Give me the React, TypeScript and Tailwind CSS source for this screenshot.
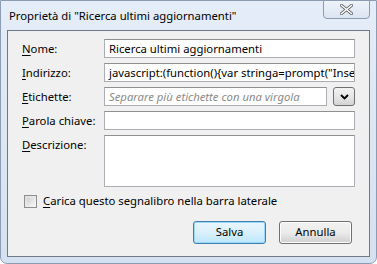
import React from "react";

const font = { fontFamily: '"Segoe UI", "Noto Sans", "Open Sans", sans-serif' };

function Key({ k, rest }: { k: string; rest: string }) {
  return (
    <span>
      <span className="underline underline-offset-2">{k}</span>
      {rest}
    </span>
  );
}

const boxCls =
  "h-[19px] flex-1 overflow-hidden whitespace-nowrap border border-[#abadb3] border-t-[#8e8f8f] bg-white px-[4px] text-[11.3px] leading-[17px]";

function Row({ label, children }: { label: React.ReactNode; children?: React.ReactNode }) {
  return (
    <div className="flex items-start">
      <div className="w-[82px] shrink-0 text-[11.3px] leading-[19px] text-black">{label}</div>
      {children}
    </div>
  );
}

export default function App() {
  return (
    <div
      className="flex h-[264px] w-[377px] flex-col overflow-hidden rounded-b-[7px] border border-[#8b9cb3] bg-gradient-to-b from-[#e4edf8] to-[#d5e1f0]"
      style={font}
    >
      {/* barra del titolo */}
      <div className="flex h-[29px] shrink-0 items-start justify-between">
        <div className="pl-[8px] pt-[7px] text-[11.3px] leading-[16px] text-black">
          Proprietà di "Ricerca ultimi aggiornamenti"
        </div>
        <div className="mr-[6px] -mt-px grid h-[19px] w-[47px] place-items-center rounded-b-[4px] border border-[#8c9bb1] bg-gradient-to-b from-[#eef3fa] to-[#dbe5f2]">
          <svg width="13" height="11" viewBox="0 0 13 11">
            <path d="M1.5 1.5 L11.5 9.5 M11.5 1.5 L1.5 9.5" stroke="#6b6b6b" strokeWidth="3.2" strokeLinecap="square" />
            <path d="M1.5 1.5 L11.5 9.5 M11.5 1.5 L1.5 9.5" stroke="#ffffff" strokeWidth="1.4" strokeLinecap="square" />
          </svg>
        </div>
      </div>

      {/* area client */}
      <div className="mx-[6px] mb-[6px] flex flex-1 flex-col border border-[#6f7a89] bg-[#f0f0f0] pl-[14px] pr-[14px] pt-[8px]">
        <div className="flex flex-col gap-[5px]">
          <Row label={<Key k="N" rest="ome:" />}>
            <div className={`${boxCls} text-black`}>Ricerca ultimi aggiornamenti</div>
          </Row>
          <Row label={<Key k="I" rest="ndirizzo:" />}>
            <div className={`${boxCls} text-black`}>javascript:(function(){"{"}var stringa=prompt("Inse</div>
          </Row>
          <Row label={<Key k="E" rest="tichette:" />}>
            <div className={`${boxCls} italic text-[#8a8a8a]`}>Separare più etichette con una virgola</div>
            <div className="ml-[6px] grid h-[19px] w-[22px] place-items-center rounded-[3px] border border-[#707070] bg-gradient-to-b from-[#f2f2f2] via-[#e6e6e6] to-[#d4d4d4]">
              <svg width="9" height="6" viewBox="0 0 9 6">
                <path d="M1 1 L4.5 4.5 L8 1" stroke="#000" strokeWidth="1.9" fill="none" />
              </svg>
            </div>
          </Row>
          <Row label={<Key k="P" rest="arola chiave:" />}>
            <div className={boxCls}></div>
          </Row>
          <Row label={<Key k="D" rest="escrizione:" />}>
            <div className={`${boxCls} h-[52px]`}></div>
          </Row>
        </div>

        <div className="mt-[6px] flex items-center pl-[2px]">
          <div className="h-[13px] w-[13px] border border-[#8f8f8f] bg-gradient-to-br from-[#dcdcdc] to-[#f6f6f6] p-[2px]">
            <div className="h-full w-full bg-gradient-to-br from-[#d0d0d0] to-[#f4f4f4]" />
          </div>
          <div className="ml-[6px] text-[11.3px] leading-[16px] text-black">
            <Key k="C" rest="arica questo segnalibro nella barra laterale" />
          </div>
        </div>

        <div className="mt-[12px] flex justify-end gap-[13px] pr-[3px]">
          <div className="grid h-[23px] w-[73px] place-items-center rounded-[3px] border border-[#3c7fb1] bg-gradient-to-b from-[#eaf6fd] via-[#d9f0fc] to-[#bee6fd] text-[11.3px] text-black shadow-[inset_0_0_0_1px_#9cd8f7]">
            Salva
          </div>
          <div className="grid h-[23px] w-[73px] place-items-center rounded-[3px] border border-[#707070] bg-gradient-to-b from-[#f2f2f2] via-[#ebebeb] to-[#cfcfcf] text-[11.3px] text-black shadow-[inset_0_0_0_1px_#fcfcfc]">
            Annulla
          </div>
        </div>
      </div>
    </div>
  );
}
